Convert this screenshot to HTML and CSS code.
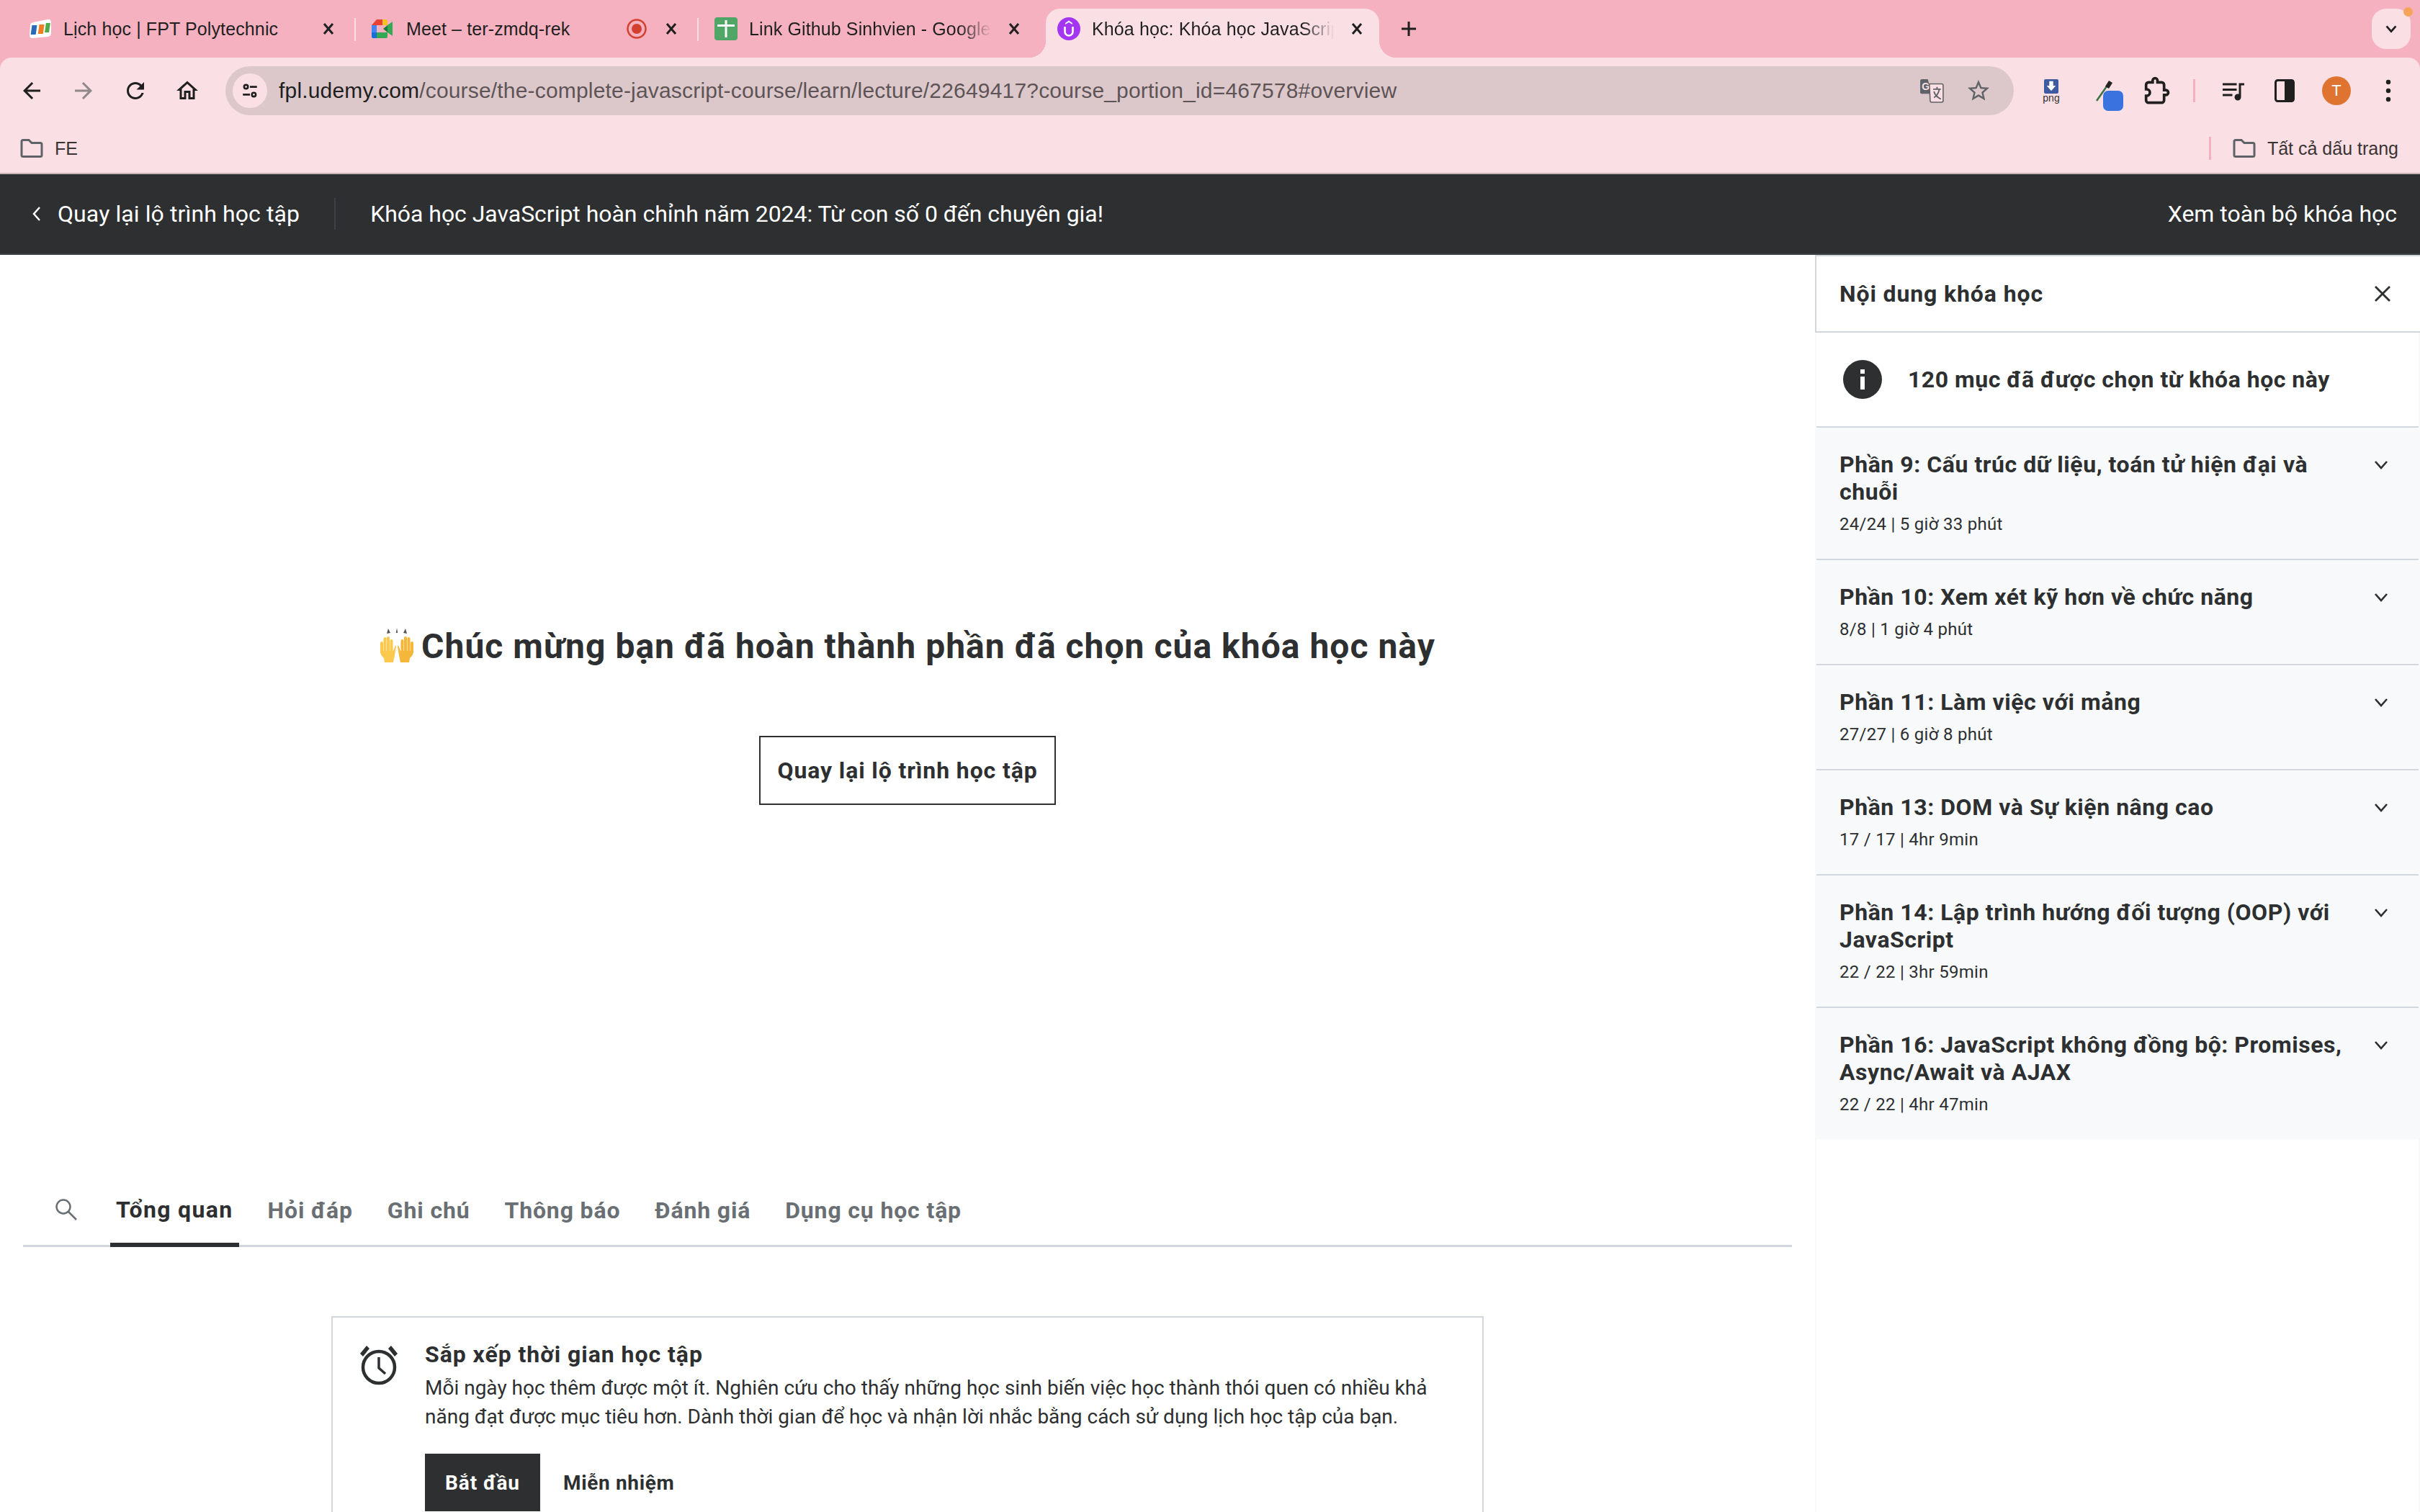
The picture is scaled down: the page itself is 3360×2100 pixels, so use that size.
FILE: index.html
```html
<!DOCTYPE html>
<html lang="vi">
<head>
<meta charset="utf-8">
<title>Khóa học</title>
<link rel="stylesheet" href="styles.css">
</head>
<body>
<header class="browser">
  <div class="tabstrip">
    <div class="tab sep">
      <svg class="fav" viewBox="0 0 32 32"><path d="M6 7 L26 3 Q31 2 31 8 L31 22 Q31 26 27 27 L5 29 Q1 29 1 25 L2 11 Q2 8 6 7Z" fill="#fff"/><rect x="6" y="11" width="7" height="13" fill="#2a6bb5" transform="skewX(-8)"/><rect x="16" y="10" width="7" height="13" fill="#ef7d23" transform="skewX(-8)"/><rect x="25" y="8" width="6" height="13" fill="#4faa4a" transform="skewX(-8)"/></svg>
      <span class="tab-title">Lịch học | FPT Polytechnic</span>
      <svg class="tab-x" viewBox="0 0 24 24"><path d="M6 5l12 14M18 5L6 19"/></svg>
    </div>
    <div class="tab sep">
      <svg class="fav" viewBox="0 0 32 32"><path d="M7 3H15V11H0Z" fill="#e94235"/><path d="M15 3H20Q22 3 22 5V11H15Z" fill="#f6c026"/><path d="M0 11H7V21H0Z" fill="#4285f4"/><path d="M0 21H7V29H2Q0 29 0 27Z" fill="#1a6dd4"/><path d="M7 21H22V27Q22 29 20 29H7Z" fill="#34a853"/><path d="M22 11L16 16 22 21Z" fill="#1e7a3a"/><path d="M22 11L29 6V26L22 21Z" fill="#34a853"/></svg>
      <span class="tab-title">Meet – ter-zmdq-rek</span>
      <svg class="rec" viewBox="0 0 28 28"><circle cx="14" cy="14" r="12.500" fill="none" stroke="#d4402f" stroke-width="2.500"/><circle cx="14" cy="14" r="7" fill="#d4402f"/></svg>
      <svg class="tab-x" viewBox="0 0 24 24"><path d="M6 5l12 14M18 5L6 19"/></svg>
    </div>
    <div class="tab">
      <svg class="fav" viewBox="0 0 32 32"><rect width="32" height="32" rx="4" fill="#4fa667"/><path d="M14.500 4h3v6H28v3H17.500v15h-3V13H4v-3h10.500z" fill="#fff"/></svg>
      <span class="tab-title fade">Link Github Sinhvien - Google Sheets</span>
      <svg class="tab-x" viewBox="0 0 24 24"><path d="M6 5l12 14M18 5L6 19"/></svg>
    </div>
    <div class="tab active">
      <svg class="fav" viewBox="0 0 32 32"><circle cx="16" cy="16" r="16" fill="#a435f0"/><path d="M16 4.500l5 3.500v2l-5-3-5 3V8z" fill="#fff"/><path d="M10.500 13v7a5.500 5.500 0 0 0 11 0v-7" fill="none" stroke="#fff" stroke-width="2.600"/></svg>
      <span class="tab-title fade">Khóa học: Khóa học JavaScript hoàn chỉnh</span>
      <svg class="tab-x" viewBox="0 0 24 24"><path d="M6 5l12 14M18 5L6 19"/></svg>
    </div>
    <svg class="newtab" viewBox="0 0 28 28"><path d="M14 4v20M4 14h20"/></svg>
    <div class="tabsearch">
      <svg viewBox="0 0 24 24"><path d="M5 8l7 8 7-8"/></svg>
      <span class="notify"></span>
    </div>
  </div>
  <div class="toolbar">
    <svg class="tool-ic" viewBox="0 0 24 24"><path d="M20 11H7.830l5.590-5.590L12 4l-8 8 8 8 1.410-1.410L7.830 13H20v-2z"/></svg>
    <svg class="tool-ic dim" viewBox="0 0 24 24"><path d="M12 4l-1.410 1.410L16.170 11H4v2h12.170l-5.580 5.590L12 20l8-8z"/></svg>
    <svg class="tool-ic" viewBox="0 0 24 24"><path d="M17.650 6.350C16.200 4.900 14.210 4 12 4c-4.420 0-7.990 3.580-7.990 8s3.570 8 7.990 8c3.730 0 6.840-2.550 7.730-6h-2.080c-.82 2.330-3.040 4-5.650 4-3.310 0-6-2.690-6-6s2.690-6 6-6c1.660 0 3.140.69 4.220 1.780L13 11h7V4l-2.350 2.350z"/></svg>
    <svg class="tool-ic" viewBox="0 0 24 24"><path d="M12 5.690l5 4.500V18h-2v-6H9v6H7v-7.810l5-4.500M12 3L2 12h3v8h6v-6h2v6h6v-8h3L12 3z"/></svg>
    <div class="omnibox">
      <span class="site-btn">
        <svg viewBox="0 0 24 24"><circle cx="7" cy="7" r="2.500"/><path d="M12 7h9M3 17h9"/><circle cx="17" cy="17" r="2.500"/></svg>
      </span>
      <span class="url"><span class="host">fpl.udemy.com</span>/course/the-complete-javascript-course/learn/lecture/22649417?course_portion_id=467578#overview</span>
      <svg class="omni-tr" viewBox="0 0 32 32"><path d="M13 20H3q-2 0-2-2V3q0-2 2-2h8l5 19z" fill="#5f6368"/><path d="M13 7h16q2 0 2 2v20q0 2-2 2H16q-2 0-2-2z" fill="#fae0e4" stroke="#5f6368" stroke-width="1.500"/><text x="3" y="15" class="tr-g">G</text><path d="M18 14h10M23 11v3M26 14c-1 6-4 9-7 11M19 17c1 4 5 8 9 10" fill="none" stroke="#5f6368" stroke-width="1.800"/></svg>
      <svg class="omni-star" viewBox="0 0 24 24"><path d="M22 9.240l-7.190-.62L12 2 9.190 8.630 2 9.240l5.460 4.730L5.820 21 12 17.270 18.180 21l-1.630-7.030L22 9.240zM12 15.400l-3.760 2.270 1-4.280-3.320-2.880 4.380-.38L12 6.100l1.710 4.040 4.380.38-3.320 2.880 1 4.280L12 15.400z"/></svg>
    </div>
    <div class="ext ext-png">
      <span class="png-box"><svg viewBox="0 0 20 20"><path d="M7 2h6v7h4l-7 8-7-8h4z" fill="#fff"/></svg></span>
      <span class="png-label">png</span>
    </div>
    <div class="ext ext-drop">
      <svg viewBox="0 0 26 30"><path d="M2 29L16 9" stroke="#3f6e44" stroke-width="2.500" fill="none"/><path d="M14 9l5-8 5 3-5 8z" fill="#222"/></svg>
      <span class="badge"></span>
    </div>
    <svg class="ext-puzzle" viewBox="0 0 24 24"><path d="M20.500 11.500H19V7c0-1.100-.9-2-2-2h-3.500V3.500a2 2 0 0 0-4 0V5H6c-1.100 0-2 .9-2 2v3.800h.5c1.500 0 2.700 1.200 2.700 2.700s-1.200 2.700-2.700 2.700H4V20c0 1.100.9 2 2 2h11c1.100 0 2-.9 2-2v-4.500h1.500a2 2 0 0 0 0-4z"/></svg>
    <span class="tool-sep"></span>
    <svg class="music" viewBox="0 0 24 24"><path d="M15 5H2v2h13V5zm0 5H2v2h13v-2zM2 17h9v-2H2v2zM17 5v10.180c-.31-.11-.65-.18-1-.18-1.660 0-3 1.340-3 3s1.340 3 3 3 3-1.340 3-3V7h3V5h-5z"/></svg>
    <svg class="panel-ic" viewBox="0 0 28 32"><rect x="1.500" y="1.500" width="25" height="29" rx="3" fill="none" stroke="#1f1f1f" stroke-width="3"/><rect x="14" y="1.500" width="13" height="29" fill="#1f1f1f"/></svg>
    <span class="avatar">T</span>
    <svg class="menu-ic" viewBox="0 0 8 32"><circle cx="4" cy="4" r="3.200"/><circle cx="4" cy="16" r="3.200"/><circle cx="4" cy="28" r="3.200"/></svg>
  </div>
  <div class="bookmarks">
    <span class="bm">
      <svg class="folder" viewBox="0 0 32 26"><path d="M2 3.500q0-2 2-2h8l4 4h12q2 0 2 2v15q0 2-2 2H4q-2 0-2-2z"/></svg>
      FE
    </span>
    <span class="bm-spacer"></span>
    <span class="bm-sep"></span>
    <span class="bm">
      <svg class="folder" viewBox="0 0 32 26"><path d="M2 3.500q0-2 2-2h8l4 4h12q2 0 2 2v15q0 2-2 2H4q-2 0-2-2z"/></svg>
      Tất cả dấu trang
    </span>
  </div>
</header>

<div class="course-bar">
  <a class="back">
    <svg viewBox="0 0 14 24"><path d="M11 3l-8 9 8 9"/></svg>
    Quay lại lộ trình học tập
  </a>
  <span class="bar-sep"></span>
  <span class="bar-title">Khóa học JavaScript hoàn chỉnh năm 2024: Từ con số 0 đến chuyên gia!</span>
  <span class="bar-link">Xem toàn bộ khóa học</span>
</div>

<div class="page">
  <main class="main">
    <section class="stage">
      <h1 class="done">
        <svg class="hands" viewBox="0 0 48 48">
          <path d="M12 1l3 6-5 1zM24 0l1.200 7h-2.400zM36 1l-3 6 5 1z" fill="#555"/>
          <g fill="#fbc94e">
            <rect x="1" y="19" width="4" height="17" rx="2"/>
            <rect x="5.500" y="13" width="4" height="22" rx="2"/>
            <rect x="10" y="12" width="4" height="22" rx="2"/>
            <rect x="14.500" y="16" width="4" height="20" rx="2"/>
            <path d="M1 32H19L22 24 23 26 21 38 19 48H7L6 42Q1 38 1 32Z"/>
          </g>
          <g fill="#f4b73a">
            <rect x="43" y="19" width="4" height="17" rx="2"/>
            <rect x="38.500" y="13" width="4" height="22" rx="2"/>
            <rect x="34" y="12" width="4" height="22" rx="2"/>
            <rect x="29.500" y="16" width="4" height="20" rx="2"/>
            <path d="M47 32H29L26 24 25 26 27 38 29 48H41L42 42Q47 38 47 32Z"/>
          </g>
        </svg>
        Chúc mừng bạn đã hoàn thành phần đã chọn của khóa học này
      </h1>
      <a class="outline-btn">Quay lại lộ trình học tập</a>
    </section>
    <nav class="tabs">
      <svg class="search-ic" viewBox="0 0 32 32"><circle cx="12" cy="12" r="9.500"/><path d="M19 19l11 11"/></svg>
      <a class="nav-tab on">Tổng quan</a>
      <a class="nav-tab">Hỏi đáp</a>
      <a class="nav-tab">Ghi chú</a>
      <a class="nav-tab">Thông báo</a>
      <a class="nav-tab">Đánh giá</a>
      <a class="nav-tab">Dụng cụ học tập</a>
    </nav>
    <div class="card">
      <svg class="alarm" viewBox="0 0 64 64"><circle cx="32" cy="36" r="22" fill="none" stroke="#2d2f31" stroke-width="4.500"/><path d="M32 22v15l9 8" fill="none" stroke="#2d2f31" stroke-width="3.500"/><path d="M6 17L15 6l4 4-9 11zM58 17L49 6l-4 4 9 11z" fill="#2d2f31"/></svg>
      <div class="card-body">
        <h2 class="card-title">Sắp xếp thời gian học tập</h2>
        <p class="card-text">Mỗi ngày học thêm được một ít. Nghiên cứu cho thấy những học sinh biến việc học thành thói quen có nhiều khả năng đạt được mục tiêu hơn. Dành thời gian để học và nhận lời nhắc bằng cách sử dụng lịch học tập của bạn.</p>
        <div class="card-actions">
          <a class="btn-dark">Bắt đầu</a>
          <a class="btn-ghost">Miễn nhiệm</a>
        </div>
      </div>
    </div>
  </main>
  <aside class="side">
    <div class="side-head">
      <span>Nội dung khóa học</span>
      <svg class="side-x" viewBox="0 0 24 24"><path d="M2 2l20 20M22 2L2 22"/></svg>
    </div>
    <div class="side-list">
      <div class="info">
        <svg class="info-ic" viewBox="0 0 54 54"><circle cx="27" cy="27" r="27" fill="#2d2f31"/><rect x="24" y="13" width="6" height="6" fill="#fff"/><rect x="24" y="23" width="6" height="18" fill="#fff"/></svg>
        <span>120 mục đã được chọn từ khóa học này</span>
      </div>
      <div class="sec">
        <div class="sec-text"><div class="sec-title">Phần 9: Cấu trúc dữ liệu, toán tử hiện đại và chuỗi</div><div class="sec-sub">24/24 | 5 giờ 33 phút</div></div>
        <svg class="chev" viewBox="0 0 20 20"><path d="M2 6l8 9 8-9"/></svg>
      </div>
      <div class="sec">
        <div class="sec-text"><div class="sec-title">Phần 10: Xem xét kỹ hơn về chức năng</div><div class="sec-sub">8/8 | 1 giờ 4 phút</div></div>
        <svg class="chev" viewBox="0 0 20 20"><path d="M2 6l8 9 8-9"/></svg>
      </div>
      <div class="sec">
        <div class="sec-text"><div class="sec-title">Phần 11: Làm việc với mảng</div><div class="sec-sub">27/27 | 6 giờ 8 phút</div></div>
        <svg class="chev" viewBox="0 0 20 20"><path d="M2 6l8 9 8-9"/></svg>
      </div>
      <div class="sec">
        <div class="sec-text"><div class="sec-title">Phần 13: DOM và Sự kiện nâng cao</div><div class="sec-sub">17 / 17 | 4hr 9min</div></div>
        <svg class="chev" viewBox="0 0 20 20"><path d="M2 6l8 9 8-9"/></svg>
      </div>
      <div class="sec">
        <div class="sec-text"><div class="sec-title">Phần 14: Lập trình hướng đối tượng (OOP) với JavaScript</div><div class="sec-sub">22 / 22 | 3hr 59min</div></div>
        <svg class="chev" viewBox="0 0 20 20"><path d="M2 6l8 9 8-9"/></svg>
      </div>
      <div class="sec last">
        <div class="sec-text"><div class="sec-title">Phần 16: JavaScript không đồng bộ: Promises, Async/Await và AJAX</div><div class="sec-sub">22 / 22 | 4hr 47min</div></div>
        <svg class="chev" viewBox="0 0 20 20"><path d="M2 6l8 9 8-9"/></svg>
      </div>
    </div>
  </aside>
</div>
</body>
</html>
```
FILE: styles.css
```css
* { box-sizing: border-box; }
html, body { margin: 0; height: 100%; overflow: hidden; }
body {
  width: 3360px; height: 2100px;
  display: flex; flex-direction: column;
  background: #fff; color: #2d2f31;
  font-family: Roboto, "Liberation Sans", sans-serif;
}
h1, h2, p { margin: 0; }
svg { display: block; flex: none; }

/* browser chrome */
.browser { background: #f5b1bf; flex: none; color: #1f1f1f; font-family: "Liberation Sans", Roboto, sans-serif; }
.tabstrip { height: 80px; display: flex; align-items: flex-start; padding-left: 16px; }
.tab {
  position: relative; width: 476px; height: 68px; margin-top: 12px; padding: 0 24px 12px;
  display: flex; align-items: center; font-size: 25px; letter-spacing: .12px; flex: none;
}
.tab.sep::after {
  content: ""; position: absolute; right: -2px; top: 13px; width: 2px; height: 32px; background: #fae0e4;
}
.tab.active { background: #fae0e4; border-radius: 20px 20px 0 0; width: 463px; margin-left: 8px; padding-left: 16px; padding-right: 19px; }
.tab.active::before, .tab.active::after {
  content: ""; position: absolute; bottom: 0; width: 24px; height: 24px;
}
.tab.active::before { left: -24px; background: radial-gradient(circle at 0 0, transparent 24px, #fae0e4 24.500px); }
.tab.active::after { right: -24px; background: radial-gradient(circle at 100% 0, transparent 24px, #fae0e4 24.500px); }
.fav { width: 32px; height: 32px; margin-right: 16px; }
.tab-title { flex: 1; min-width: 0; white-space: nowrap; overflow: hidden; }
.tab-title.fade { -webkit-mask-image: linear-gradient(90deg, #000 86%, transparent 99%); mask-image: linear-gradient(90deg, #000 86%, transparent 99%); }
.rec { width: 28px; height: 28px; margin-right: 6px; }
.tab-x { width: 24px; height: 24px; margin-left: 16px; fill: none; stroke: #1f1f1f; stroke-width: 3; }
.newtab { width: 28px; height: 28px; margin: 26px 0 0 27px; fill: none; stroke: #1f1f1f; stroke-width: 3; }
.tabsearch {
  position: relative; margin: 12px 13px 0 auto; width: 54px; height: 56px; border-radius: 20px;
  background: #fae0e4; display: flex; align-items: center; justify-content: center;
}
.tabsearch svg { width: 22px; height: 22px; fill: none; stroke: #1f1f1f; stroke-width: 3; }
.notify { position: absolute; top: -2px; right: -3px; width: 13px; height: 13px; border-radius: 50%; background: #f5a55a; }

.toolbar {
  height: 80px; background: #fae0e4; border-radius: 16px 16px 0 0; display: flex; align-items: center; padding: 12px 0 0 0;
}
.tool-ic { width: 36px; height: 36px; margin-left: 26px; margin-right: 10px; fill: #1f1f1f; }
.tool-ic.dim { fill: #8f8789; }
.omnibox {
  width: 2483px; height: 68px; margin-left: 25px; border-radius: 34px; background: #dcc8cb; display: flex; align-items: center; padding: 0 32px 0 10px;
}
.site-btn { width: 48px; height: 48px; border-radius: 50%; background: #fae0e4; display: flex; align-items: center; justify-content: center; }
.site-btn svg { width: 26px; height: 26px; fill: none; stroke: #1f1f1f; stroke-width: 2.400; }
.url { flex: 1; margin-left: 16px; font-size: 30px; letter-spacing: .18px; color: #5e5456; white-space: nowrap; }
.host { color: #1f1f1f; }
.omni-tr { width: 34px; height: 34px; margin-right: 30px; }
.tr-g { font: 700 13px "Liberation Sans", sans-serif; fill: #fae0e4; }
.omni-star { width: 36px; height: 36px; fill: #5f6368; margin-right: -1px; }

.ext-png { width: 24px; margin-left: 40px; display: flex; flex-direction: column; align-items: center; }
.png-box { width: 20px; height: 20px; background: #3f5aa0; border-radius: 2px; display: flex; align-items: center; justify-content: center; }
.png-box svg { width: 18px; height: 18px; }
.png-label { font-size: 14px; line-height: 12px; color: #333; }
.ext-drop { position: relative; width: 39px; height: 44px; margin: 14px 0 0 49px; }
.ext-drop svg { width: 26px; height: 30px; }
.badge { position: absolute; left: 11px; top: 15px; width: 28px; height: 28px; border-radius: 7px; background: #3a72e0; }
.ext-puzzle { width: 40px; height: 40px; margin-left: 25px; fill: none; stroke: #1f1f1f; stroke-width: 2.200; }
.tool-sep { width: 3px; height: 32px; background: #f5b1bf; margin-left: 32px; }
.music { margin-left: 35px; width: 36px; height: 36px; fill: #1f1f1f; }
.panel-ic { width: 28px; height: 32px; margin-left: 39px; }
.avatar { width: 40px; height: 40px; border-radius: 50%; background: #df7430; color: #fff; font-size: 22px; display: flex; align-items: center; justify-content: center; margin-left: 38px; }
.menu-ic { width: 8px; height: 32px; margin-left: 48px; fill: #1f1f1f; }

.bookmarks {
  height: 82px; background: #fae0e4; border-bottom: 2px solid #c9b2b6; display: flex; align-items: center; padding: 12px 30px 0 28px; font-size: 25px;
}
.bm { display: flex; align-items: center; color: #3a3334; }
.folder { width: 32px; height: 26px; margin-right: 16px; fill: none; stroke: #5f6368; stroke-width: 3; }
.bm-spacer { flex: 1; }
.bm-sep { width: 3px; height: 32px; background: #f5b1bf; margin-right: 30px; }

/* course bar */
.course-bar {
  height: 112px; flex: none; background: #2d2f31; border-bottom: 2px solid #3e4143; color: #fff; display: flex; align-items: center; font-size: 32px; padding: 0 32px 0 44px;
}
.back { display: flex; align-items: center; letter-spacing: .1px; }
.back svg { width: 14px; height: 24px; margin-right: 22px; fill: none; stroke: #fff; stroke-width: 2.500; }
.bar-sep { width: 2px; height: 44px; background: #3e4143; margin: 0 48px; }
.bar-title { letter-spacing: -.03px; }
.bar-link { margin-left: auto; }

/* page */
.page { flex: 1; display: flex; min-height: 0; }
.main { width: 2520px; flex: none; }
.stage { height: 1280px; display: flex; flex-direction: column; align-items: center; padding-top: 510px; }
.done { display: flex; align-items: center; font-size: 48px; line-height: 68px; font-weight: 700; letter-spacing: 1.02px; }
.hands { width: 48px; height: 48px; margin-right: 10px; margin-top: -4px; }
.outline-btn { margin-top: 90px; width: 412px; height: 96px; border: 2px solid #2d2f31; display: flex; align-items: center; justify-content: center; font-size: 32px; font-weight: 700; letter-spacing: .88px; }

.tabs { margin: 0 32px; height: 98px; border-bottom: 3px solid #d1d7dc; display: flex; align-items: stretch; gap: 32px; color: #6a6f73; }
.search-ic { width: 32px; height: 32px; margin: 30px 13px 0 44px; fill: none; stroke: #6a6f73; stroke-width: 2.500; }
.nav-tab { padding: 0 8px 4px; font-size: 32px; font-weight: 700; display: flex; align-items: center; margin-bottom: -3px; letter-spacing: .85px; }
.nav-tab.on { color: #2d2f31; border-bottom: 6px solid #2d2f31; padding-bottom: 0; letter-spacing: 1.35px; }

.card { width: 1600px; margin: 96px auto 0; padding: 33px 32px 0; border: 2px solid #d1d7dc; display: flex; gap: 32px; height: 400px; }
.alarm { width: 64px; height: 64px; }
.card-body { flex: 1; min-width: 0; }
.card-title { font-size: 32px; line-height: 38px; font-weight: 700; letter-spacing: .95px; margin-top: -1px; }
.card-text { font-size: 28px; line-height: 40px; margin-top: 8px; }
.card-actions { display: flex; margin-top: 31px; }
.btn-dark { width: 160px; height: 80px; background: #2d2f31; color: #fff; font-size: 28px; font-weight: 700; display: flex; align-items: center; justify-content: center; letter-spacing: .9px; }
.btn-ghost { padding: 0 32px; font-size: 28px; font-weight: 700; display: flex; align-items: center; letter-spacing: .65px; }

/* sidebar */
.side { flex: 1; min-width: 0; }
.side-head { height: 108px; padding: 0 40px 0 32px; border-left: 2px solid #d1d7dc; border-top: 2px solid #d1d7dc; border-bottom: 2px solid #d1d7dc; display: flex; align-items: center; justify-content: space-between; font-size: 32px; font-weight: 700; letter-spacing: .88px; }
.side-x { width: 24px; height: 24px; fill: none; stroke: #2d2f31; stroke-width: 2.800; }
.side-list { border-left: 2px solid #f7f9fa; border-right: 2px solid #f7f9fa; min-height: 1700px; }
.info { height: 132px; border-bottom: 2px solid #d1d7dc; display: flex; align-items: center; padding-left: 37px; font-size: 32px; font-weight: 700; gap: 36px; letter-spacing: .5px; }
.info-ic { width: 54px; height: 54px; }
.sec { background: #f7f9fa; padding: 32px 32px 30px; border-bottom: 2px solid #d1d7dc; display: flex; gap: 24px; }
.sec.last { border-bottom: 0; }
.sec-text { flex: 1; min-width: 0; }
.sec-title { font-size: 32px; line-height: 38px; font-weight: 700; letter-spacing: .55px; }
.sec-sub { font-size: 24px; line-height: 36px; margin-top: 8px; letter-spacing: .28px; }
.chev { width: 20px; height: 20px; margin: 9px 10px 0 0; fill: none; stroke: #2d2f31; stroke-width: 2.600; }
```
